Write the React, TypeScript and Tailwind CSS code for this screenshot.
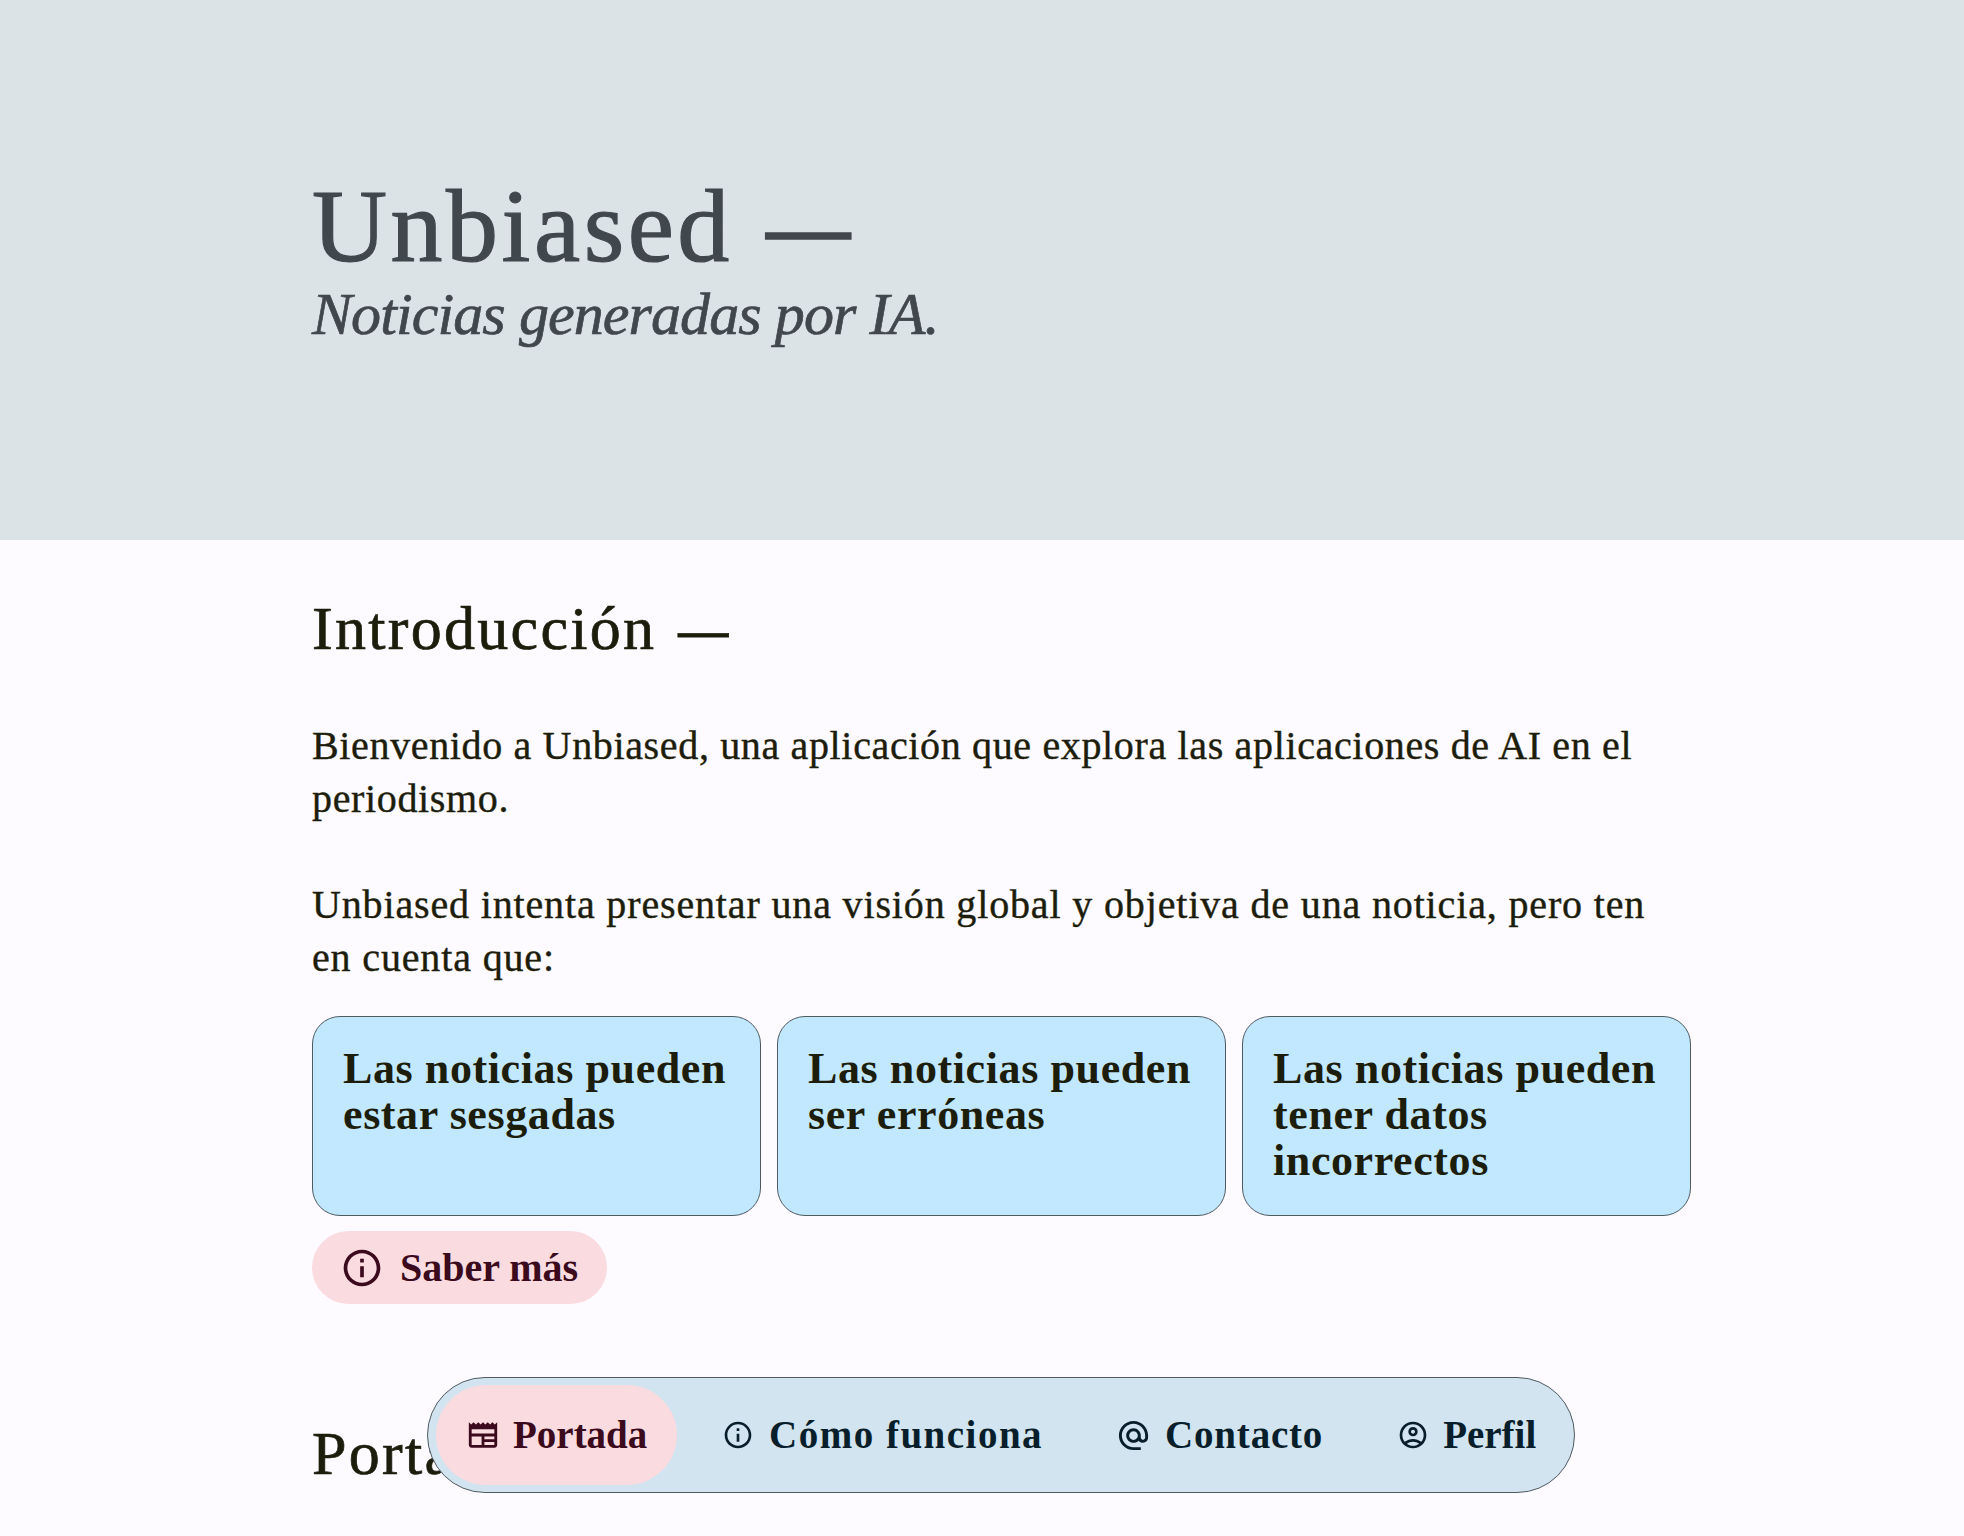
import { MdNewspaper, MdInfoOutline, MdAlternateEmail } from "react-icons/md";

const serif = "font-['Liberation_Serif',serif]";

const cards = [
  "Las noticias pueden estar sesgadas",
  "Las noticias pueden ser erróneas",
  "Las noticias pueden tener datos incorrectos",
];

function AccountIcon({ className }: { className?: string }) {
  return (
    <svg viewBox="0 -960 960 960" fill="currentColor" className={className}>
      <path d="M234-276q51-39 114-61.5T480-360q69 0 132 22.5T726-276q35-41 54.5-93T800-480q0-133-93.5-226.5T480-800q-133 0-226.5 93.5T160-480q0 59 19.5 111t54.5 93Zm246-164q-59 0-99.5-40.5T340-580q0-59 40.5-99.5T480-720q59 0 99.5 40.5T620-580q0 59-40.5 99.5T480-440Zm0 360q-83 0-156-31.5T197-197q-54-54-85.5-127T80-480q0-83 31.5-156T197-763q54-54 127-85.5T480-880q83 0 156 31.5T763-763q54 54 85.5 127T880-480q0 83-31.5 156T763-197q-54 54-127 85.5T480-80Zm0-80q53 0 100-15.5t86-44.5q-39-29-86-44.5T480-280q-53 0-100 15.5T294-220q39 29 86 44.5T480-160Zm0-360q26 0 43-17t17-43q0-26-17-43t-43-17q-26 0-43 17t-17 43q0 26 17 43t43 17Zm0-60Zm0 360Z" />
    </svg>
  );
}

export default function App() {
  return (
    <div className={`relative h-screen overflow-hidden bg-[#fdfbff] text-[#1d1d0c] ${serif}`}>
      <header className="flex h-[540px] flex-col bg-[#dce3e7] pl-[312px] pt-[168px] text-[#41484d]">
        <h1 className="text-[104px] leading-[116px] tracking-[3.5px] [-webkit-text-stroke:1.2px_#41484d]">
          Unbiased <span className="ml-[4px] align-[5px] text-[84px] font-bold leading-none tracking-normal [-webkit-text-stroke:1.5px_#41484d]">—</span>
        </h1>
        <p className="-mt-[3px] text-[60px] italic leading-[66px] tracking-[-0.9px] [-webkit-text-stroke:0.7px_#41484d]">
          Noticias generadas por IA.
        </p>
      </header>

      <main className="ml-[312px] w-[1379px]">
        <h2 className="mt-[53px] text-[62px] leading-[70px] tracking-[2.3px] [-webkit-text-stroke:0.7px_#1d1d0c]">
          Introducción <span className="ml-[4px] align-[2px] text-[50px] font-bold leading-none tracking-normal [-webkit-text-stroke:0.8px_#1d1d0c]">—</span>
        </h2>
        <p className="mt-[56px] max-w-[1350px] text-[40px] leading-[53px] tracking-[0.65px] [-webkit-text-stroke:0.4px_#1d1d0c]">
          Bienvenido a Unbiased, una aplicación que explora las aplicaciones de AI en el periodismo.
        </p>
        <p className="mt-[53px] max-w-[1350px] text-[40px] leading-[53px] tracking-[0.85px] [-webkit-text-stroke:0.4px_#1d1d0c]">
          Unbiased intenta presentar una visión global y objetiva de una noticia, pero ten en cuenta que:
        </p>

        <div className="mt-[32px] grid grid-cols-3 gap-4">
          {cards.map((c) => (
            <div key={c} className="h-[200px] rounded-[28px] border border-[#4f5a61] bg-[#c1e8ff] px-[30px] pt-[29px]">
              <h3 className="text-[44px] font-bold leading-[46px] tracking-[0.6px]">{c}</h3>
            </div>
          ))}
        </div>

        <button className="mt-[15px] flex h-[73px] w-[295px] items-center rounded-full bg-[#fadbe0] pl-[28px] text-[40px] font-bold text-[#3b0a1c]">
          <MdInfoOutline className="mr-[16px] size-[44px] shrink-0" />
          Saber más
        </button>

        <h2 className="mt-[114px] text-[62px] leading-[70px] tracking-[2.3px] [-webkit-text-stroke:0.7px_#1d1d0c]">Portada</h2>
      </main>

      <nav className="absolute bottom-[43px] left-[427px] flex h-[116px] w-[1148px] items-center rounded-[58px] border border-[#4f5a61] bg-[#d1e4f0] px-[8px] text-[39px] font-bold text-[#091e2b]">
        <a className="flex h-[100px] w-[241px] items-center rounded-full bg-[#fadbe0] pl-[30px] text-[#3b0a1c]">
          <MdNewspaper className="mr-[13px] size-[34px] shrink-0" />
          Portada
        </a>
        <a className="ml-[45px] flex items-center tracking-[1.5px]">
          <MdInfoOutline className="mr-[15px] size-[32px] shrink-0" />
          Cómo funciona
        </a>
        <a className="ml-[73px] flex items-center tracking-[0.8px]">
          <MdAlternateEmail className="mr-[14px] size-[35px] shrink-0" />
          Contacto
        </a>
        <a className="ml-[74px] flex items-center">
          <AccountIcon className="mr-[14px] size-[32px] shrink-0" />
          Perfil
        </a>
      </nav>
    </div>
  );
}
